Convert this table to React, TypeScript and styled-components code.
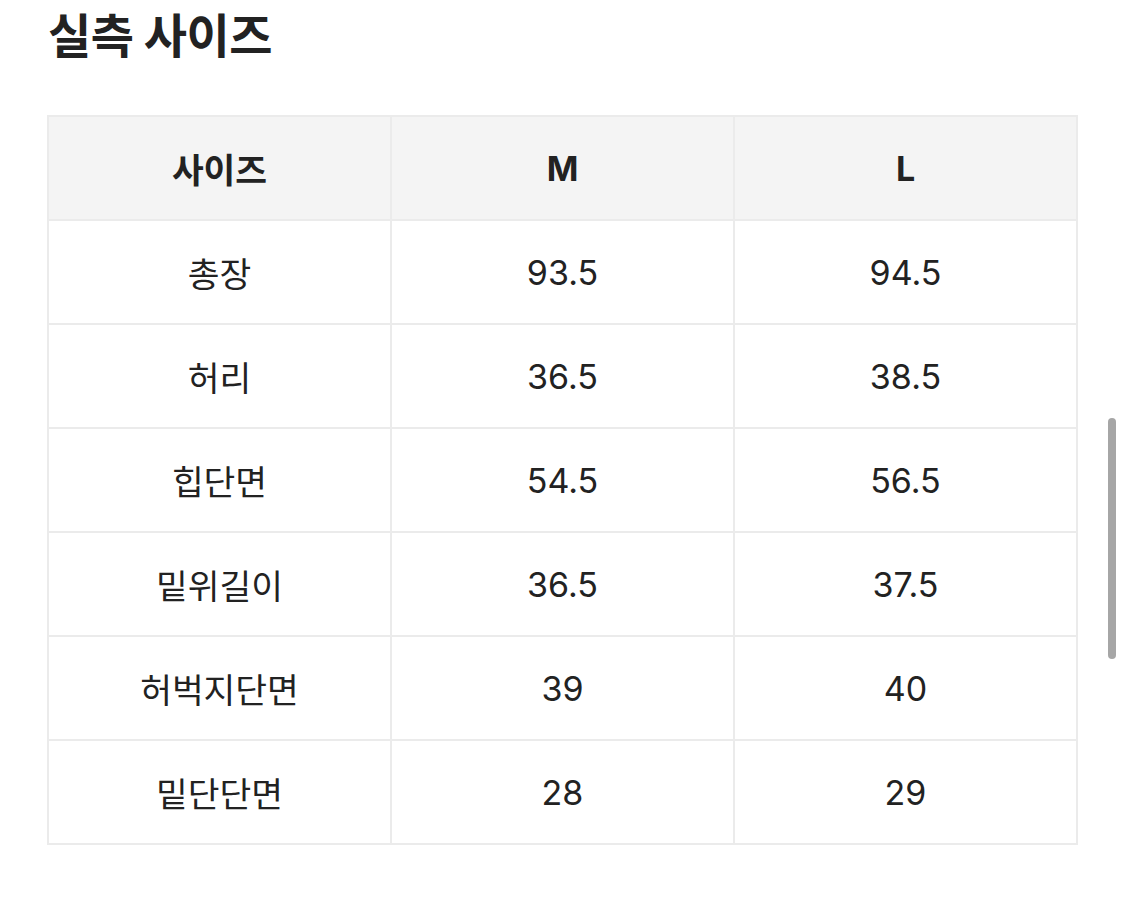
import React from 'react';
import styled, { createGlobalStyle } from 'styled-components';

const GlobalStyle = createGlobalStyle`
  html, body {
    margin: 0;
    padding: 0;
    background: #ffffff;
  }

  body {
    font-family: "Inter", "Noto Sans CJK KR", sans-serif;
    color: #222222;
  }
`;

const Page = styled.div`
  padding: 0 47px;
  width: 1031px;
`;

const Title = styled.h2`
  margin: 0;
  padding: 0 0 0 1px;
  height: 115px;
  box-sizing: border-box;
  font-family: "Noto Sans CJK KR", sans-serif;
  font-size: 47px;
  font-weight: 700;
  letter-spacing: -0.5px;
  line-height: 66px;
  color: #222222;
`;

const SizeTable = styled.table`
  width: 1031px;
  border-collapse: collapse;
  table-layout: fixed;
  border: 2px solid #ebebeb;
`;

const HeadCell = styled.th`
  height: 102px;
  padding: 0;
  background: #f4f4f4;
  border: 2px solid #ebebeb;
  font-size: 34px;
  font-weight: 700;
  color: #222222;
  text-align: center;
  vertical-align: middle;
`;

const Cell = styled.td`
  height: 102px;
  padding: 0;
  border: 2px solid #ebebeb;
  font-size: 34px;
  font-weight: 400;
  color: #222222;
  text-align: center;
  vertical-align: middle;
`;

const Label = styled.span`
  font-family: "Noto Sans CJK KR", sans-serif;
  font-size: 34.5px;
`;

const ScrollThumb = styled.div`
  position: fixed;
  right: 9px;
  top: 418px;
  width: 8px;
  height: 241px;
  border-radius: 4px;
  background: #a6a6a6;
`;

const rows: [string, string, string][] = [
  ['총장', '93.5', '94.5'],
  ['허리', '36.5', '38.5'],
  ['힙단면', '54.5', '56.5'],
  ['밑위길이', '36.5', '37.5'],
  ['허벅지단면', '39', '40'],
  ['밑단단면', '28', '29'],
];

export default function App() {
  return (
    <Page>
      <GlobalStyle />
      <Title>실측 사이즈</Title>
      <SizeTable>
        <thead>
          <tr>
            <HeadCell>
              <Label>사이즈</Label>
            </HeadCell>
            <HeadCell>M</HeadCell>
            <HeadCell>L</HeadCell>
          </tr>
        </thead>
        <tbody>
          {rows.map(([name, m, l]) => (
            <tr key={name}>
              <Cell>
                <Label>{name}</Label>
              </Cell>
              <Cell>{m}</Cell>
              <Cell>{l}</Cell>
            </tr>
          ))}
        </tbody>
      </SizeTable>
      <ScrollThumb />
    </Page>
  );
}
